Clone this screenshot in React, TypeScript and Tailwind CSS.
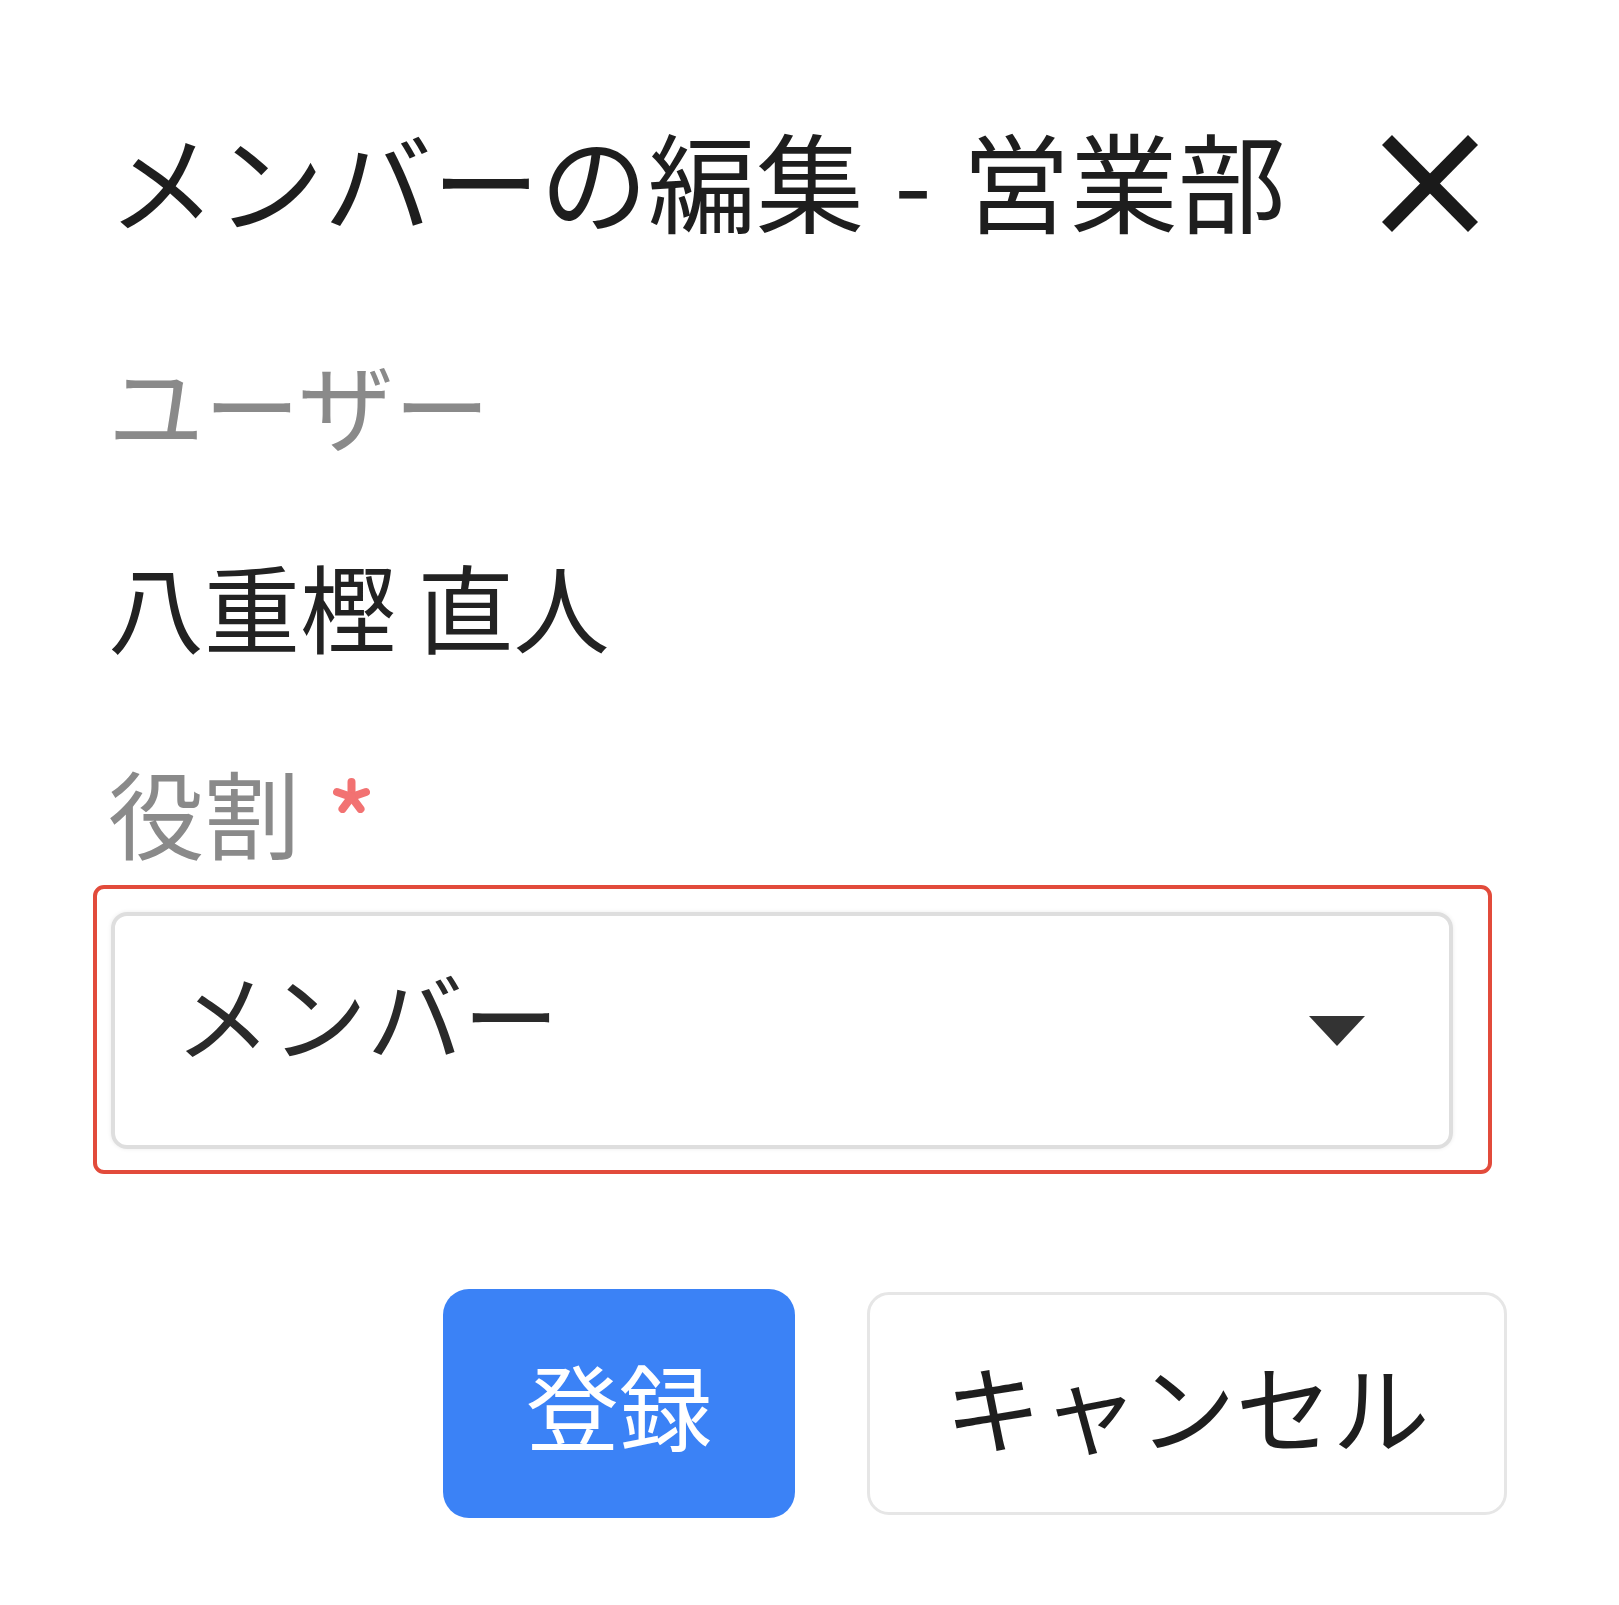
export default function App() {
  return (
    <div className="min-h-[1605px] w-full bg-white font-['Noto_Sans_CJK_JP','Noto_Sans',sans-serif]">
      <div className="w-[1507px] pl-[108px] pt-[123px]">
        <div className="flex items-center justify-between pr-[29px]">
          <div className="text-[108px] leading-none text-[#1e1e1e] whitespace-nowrap">
            メンバーの編集<span className="px-[6px]"> - </span>営業部
          </div>
          <svg width="96" height="97" viewBox="0 0 96 97" className="mt-[12px]">
            <line x1="5" y1="5" x2="91" y2="92" stroke="#1a1a1a" strokeWidth="14" />
            <line x1="91" y1="5" x2="5" y2="92" stroke="#1a1a1a" strokeWidth="14" />
          </svg>
        </div>

        <div className="mt-[123px] text-[96px] leading-none text-[#8a8a8a]">ユーザー</div>

        <div className="mt-[106px] text-[96px] leading-none text-[#222222]">八重樫 直人</div>

        <div className="mt-[110px] flex items-start gap-[30px]">
          <span className="text-[96px] leading-none text-[#8a8a8a]">役割</span>
          <svg width="43" height="38" viewBox="0 0 43 38" className="mt-[14px]">
            <g stroke="#f05a5a" strokeWidth="8" strokeLinecap="round" opacity="0.85">
              <line x1="21.5" y1="20" x2="21.5" y2="5" />
              <line x1="21.5" y1="20" x2="36" y2="15" />
              <line x1="21.5" y1="20" x2="30.5" y2="32" />
              <line x1="21.5" y1="20" x2="12.5" y2="32" />
              <line x1="21.5" y1="20" x2="7" y2="15" />
            </g>
          </svg>
        </div>

        <div className="mt-[26px] -ml-[15px] w-[1399px] h-[289px] rounded-[11px] border-[4px] border-[#e24b3b] pl-[14px] pt-[23px] pr-[35px]">
          <div className="flex h-[237px] items-center justify-between rounded-[16px] border-[4px] border-[#dedede] pl-[60px] pr-[84px] shadow-[0_0_4px_rgba(0,0,0,0.08)]">
            <span className="mb-[35px] text-[96px] leading-none text-[#2a2a2a]">メンバー</span>
            <svg width="56" height="30" viewBox="0 0 56 30">
              <polygon points="0,0 56,0 28,30" fill="#333333" />
            </svg>
          </div>
        </div>

        <div className="mt-[115px] flex items-center justify-end gap-[72px]">
          <button className="flex h-[229px] w-[352px] items-center justify-center rounded-[26px] bg-[#3b82f6] text-[93px] leading-none text-white">
            登録
          </button>
          <button className="flex h-[223px] w-[640px] items-center justify-center rounded-[22px] border-[3px] border-[#e6e6e6] bg-white text-[97px] leading-none text-[#1e1e1e]">
            キャンセル
          </button>
        </div>
      </div>
    </div>
  );
}
